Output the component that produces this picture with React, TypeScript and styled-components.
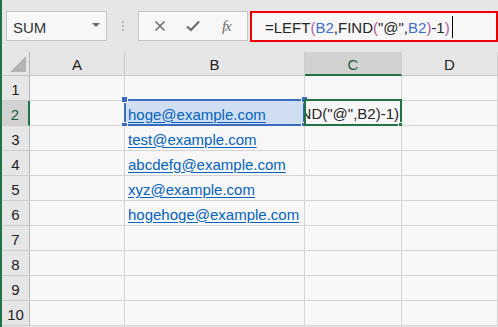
import styled, { createGlobalStyle, css } from 'styled-components';

const GlobalStyle = createGlobalStyle`
  html, body {
    margin: 0;
    padding: 0;
    background: #e6e6e6;
    font-family: 'Liberation Sans', Arial, sans-serif;
  }
`;

const Sheet = styled.div`
  width: 498px;
  height: 327px;
  box-sizing: border-box;
  border-left: 2px solid #217346;
  background: #e6e6e6;
  display: flex;
  flex-direction: column;
  overflow: hidden;
`;

const FormulaBar = styled.div`
  height: 52px;
  box-sizing: border-box;
  padding: 11px 0 0 4px;
  display: flex;
  align-items: flex-start;
`;

const NameBox = styled.div`
  width: 101px;
  height: 30px;
  box-sizing: border-box;
  border: 1px solid #c6c6c6;
  background: #f7f7f7;
  display: flex;
  align-items: center;
  justify-content: space-between;
  padding: 2px 6px 0 6px;
  font-size: 15px;
  color: #333;
`;

const DropArrow = styled.span`
  width: 0;
  height: 0;
  border-left: 4px solid transparent;
  border-right: 4px solid transparent;
  border-top: 4px solid #6a6a6a;
  margin-top: -4px;
`;

const Grip = styled.div`
  width: 31px;
  height: 30px;
  display: flex;
  flex-direction: column;
  align-items: center;
  justify-content: center;
  gap: 2px;
`;

const GripDot = styled.span`
  width: 2px;
  height: 2px;
  background: #b4b4b4;
`;

const ButtonBox = styled.div`
  width: 110px;
  height: 30px;
  box-sizing: border-box;
  border: 1px solid #c6c6c6;
  background: #f7f7f7;
  display: grid;
  grid-template-columns: 1fr 1fr 1fr;
  align-items: center;
  justify-items: center;
  padding: 0 4px;
`;

const FxLabel = styled.span`
  font-family: 'Liberation Serif', 'Times New Roman', serif;
  font-style: italic;
  font-size: 15px;
  color: #6d6d6d;
  letter-spacing: -1px;
`;

const FormulaInput = styled.div`
  margin-left: 2px;
  width: 248px;
  height: 31px;
  box-sizing: border-box;
  border: 2px solid #ee0000;
  background: #f7f7f7;
  display: flex;
  align-items: center;
  padding: 1px 0 0 13px;
  font-size: 15px;
  color: #262626;
  white-space: nowrap;
`;

const Caret = styled.span`
  display: inline-block;
  width: 1px;
  height: 22px;
  background: #000;
  margin-left: 2px;
`;

const Ref = styled.span`
  color: #3c6fd0;
`;

const Paren = styled.span`
  color: #b05a9c;
`;

const Grid = styled.div`
  display: grid;
  grid-template-columns: 28px 95px 180px 97px 96px;
  grid-template-rows: 24px repeat(10, 25px);
`;

const Corner = styled.div`
  position: relative;
  box-sizing: border-box;
  border-right: 1px solid #b8b8b8;
  border-bottom: 1px solid #c8c8c8;
  background: #e6e6e6;
  display: flex;
  align-items: flex-end;
  justify-content: flex-end;
  padding: 0 3px 3px 0;
`;

const ColHeader = styled.div<{ $active?: boolean }>`
  box-sizing: border-box;
  border-right: 1px solid #cdcdcd;
  border-bottom: 1px solid #c8c8c8;
  background: #e6e6e6;
  display: flex;
  align-items: center;
  justify-content: center;
  padding-top: 2px;
  font-size: 15px;
  color: #222;
  ${(p) =>
    p.$active &&
    css`
      background: #d2d2d2;
      border-bottom: 2px solid #217346;
      color: #1e5e3a;
    `}
`;

const RowHeader = styled.div<{ $active?: boolean }>`
  box-sizing: border-box;
  border-right: 1px solid #b8b8b8;
  border-bottom: 1px solid #cdcdcd;
  background: #e6e6e6;
  display: flex;
  align-items: center;
  justify-content: center;
  padding-top: 2px;
  font-size: 15px;
  color: #222;
  ${(p) =>
    p.$active &&
    css`
      background: #d2d2d2;
      border-right: 2px solid #217346;
      color: #1e5e3a;
    `}
`;

const Cell = styled.div<{ $selected?: boolean; $align?: 'left' | 'right' }>`
  position: relative;
  box-sizing: border-box;
  border-right: 1px solid #d4d4d4;
  border-bottom: 1px solid #d4d4d4;
  background: ${(p) => (p.$selected ? '#cfdef1' : '#f7f7f7')};
  display: flex;
  align-items: center;
  justify-content: ${(p) => (p.$align === 'right' ? 'flex-end' : 'flex-start')};
  padding: 2px 3px 0 3px;
  font-size: 15px;
  color: #222;
  white-space: nowrap;
`;

const Link = styled.span`
  color: #0563c1;
  text-decoration: underline;
  text-underline-offset: 2px;
`;

const ClipText = styled.div`
  position: absolute;
  inset: 2px 2px 2px 0;
  overflow: hidden;
  display: flex;
  justify-content: flex-end;
  align-items: center;
  padding-top: 1px;
  white-space: nowrap;
  font-size: 15px;
  color: #262626;
`;

const Outline = styled.div<{ $color: string }>`
  position: absolute;
  top: -2px;
  left: -1px;
  right: -1px;
  bottom: -1px;
  border: 2px solid ${(p) => p.$color};
  pointer-events: none;
`;

const Handle = styled.span<{ $color: string; $x: 'left' | 'right'; $y: 'top' | 'bottom' }>`
  position: absolute;
  width: 5px;
  height: 5px;
  background: ${(p) => p.$color};
  border: 1px solid #f7f7f7;
  ${(p) => (p.$x === 'left' ? 'left: -5px;' : 'right: -5px;')}
  ${(p) => (p.$y === 'top' ? 'top: -5px;' : 'bottom: -5px;')}
`;

const emails = [
  'hoge@example.com',
  'test@example.com',
  'abcdefg@example.com',
  'xyz@example.com',
  'hogehoge@example.com',
];

const columns = ['A', 'B', 'C', 'D'];

const BLUE = '#3a6bc4';
const GREEN = '#217346';

function Formula() {
  return (
    <>
      =LEFT<Paren>(</Paren>
      <Ref>B2</Ref>,FIND<Paren>(</Paren>"@",<Ref>B2</Ref>
      <Paren>)</Paren>-1<Paren>)</Paren>
    </>
  );
}

function CancelIcon() {
  return (
    <svg width="12" height="12" viewBox="0 0 12 12">
      <path d="M1.5 1.5 L10.5 10.5 M10.5 1.5 L1.5 10.5" stroke="#6d6d6d" strokeWidth="1.6" />
    </svg>
  );
}

function EnterIcon() {
  return (
    <svg width="14" height="12" viewBox="0 0 14 12">
      <path d="M1 6.5 L5 10 L13 1.5" stroke="#6d6d6d" strokeWidth="2.2" fill="none" />
    </svg>
  );
}

function SelectAllIcon() {
  return (
    <svg width="16" height="16" viewBox="0 0 16 16">
      <polygon points="16,0 16,16 0,16" fill="#b4b4b4" />
    </svg>
  );
}

export default function App() {
  return (
    <>
      <GlobalStyle />
      <Sheet>
        <FormulaBar>
          <NameBox>
            SUM
            <DropArrow />
          </NameBox>
          <Grip>
            <GripDot />
            <GripDot />
            <GripDot />
          </Grip>
          <ButtonBox>
            <CancelIcon />
            <EnterIcon />
            <FxLabel>fx</FxLabel>
          </ButtonBox>
          <FormulaInput>
            <Formula />
            <Caret />
          </FormulaInput>
        </FormulaBar>
        <Grid>
          <Corner>
            <SelectAllIcon />
          </Corner>
          {columns.map((c) => (
            <ColHeader key={c} $active={c === 'C'}>
              {c}
            </ColHeader>
          ))}
          {Array.from({ length: 10 }, (_, i) => {
            const row = i + 1;
            const email = row >= 2 && row <= 6 ? emails[row - 2] : null;
            return [
              <RowHeader key={`h${row}`} $active={row === 2}>
                {row}
              </RowHeader>,
              <Cell key={`a${row}`} />,
              <Cell key={`b${row}`} $selected={row === 2}>
                {email && <Link>{email}</Link>}
                {row === 2 && (
                  <Outline $color={BLUE}>
                    <Handle $color={BLUE} $x="left" $y="top" />
                    <Handle $color={BLUE} $x="left" $y="bottom" />
                    <Handle $color={BLUE} $x="right" $y="top" />
                    <Handle $color={BLUE} $x="right" $y="bottom" />
                  </Outline>
                )}
              </Cell>,
              <Cell key={`c${row}`}>
                {row === 2 && (
                  <>
                    <ClipText>
                      <span>
                        =LEFT(B2,FIND("@",B2)-1)
                      </span>
                    </ClipText>
                    <Outline $color={GREEN}>
                      <Handle $color={GREEN} $x="right" $y="bottom" />
                    </Outline>
                  </>
                )}
              </Cell>,
              <Cell key={`d${row}`} />,
            ];
          })}
        </Grid>
      </Sheet>
    </>
  );
}
